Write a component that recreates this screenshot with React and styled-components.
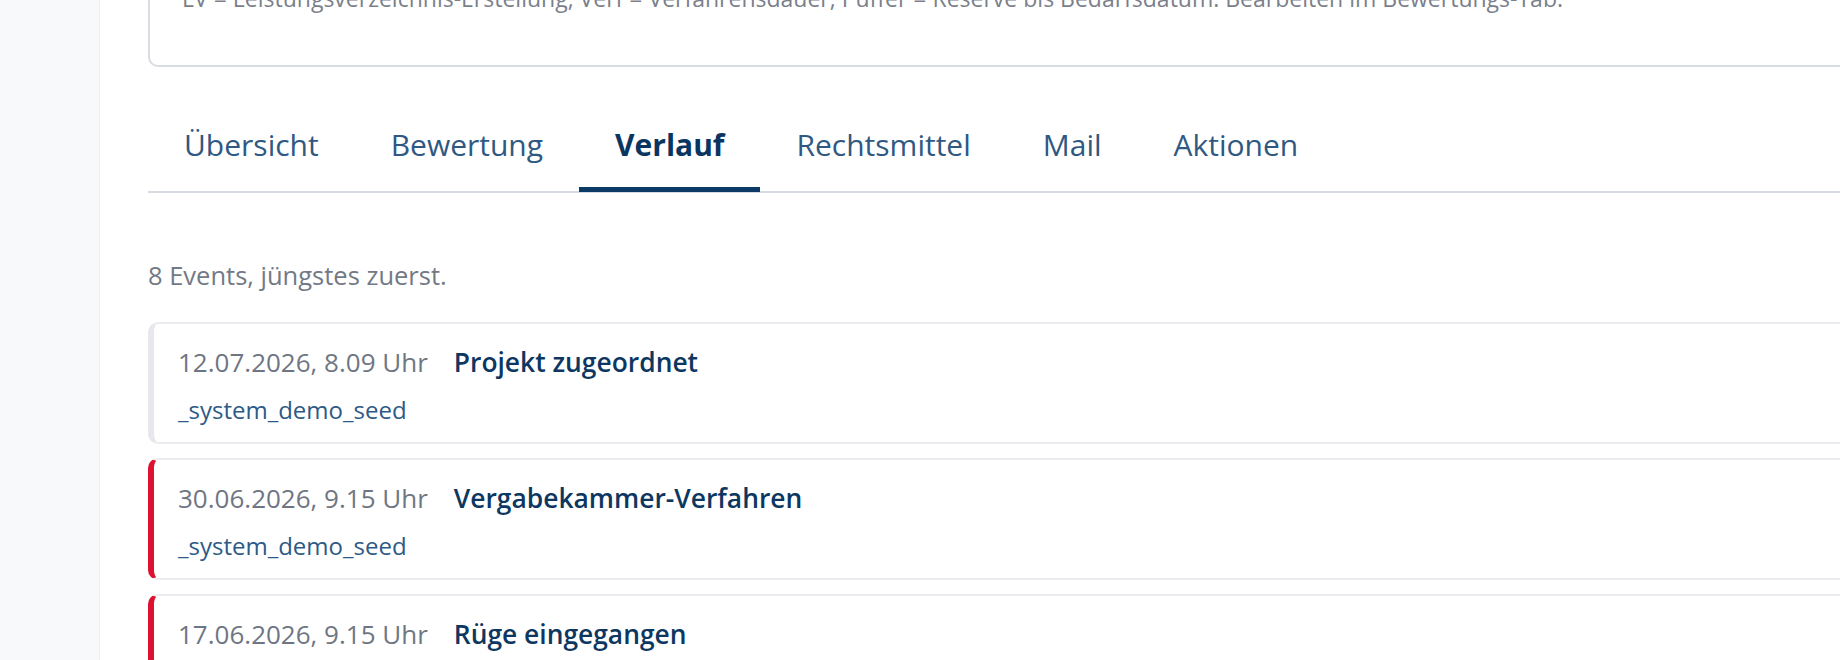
import React from "react";
import styled, { createGlobalStyle } from "styled-components";

const Global = createGlobalStyle`
  html, body { margin: 0; padding: 0; background: #ffffff; overflow: hidden; }
  body { font-family: "Open Sans", "Noto Sans", sans-serif; }
  * { box-sizing: border-box; }
`;

const Shell = styled.div`
  display: flex;
  width: 100%;
  height: 660px;
  overflow: hidden;
`;

const Sidebar = styled.aside`
  flex: 0 0 100px;
  background: #f8f9fb;
  border-right: 1px solid #eef1f4;
`;

const Main = styled.main`
  flex: 1;
  min-width: 0;
  padding-left: 48px;
  margin-right: -60px;
  display: flex;
  flex-direction: column;
`;

const NoteCard = styled.section`
  margin-top: -40px;
  border: 2px solid #d8dde3;
  border-radius: 10px;
  padding: 20px 32px 50px 32px;
  color: #7a7f8b;
  font-size: 23px;
  line-height: 33px;
  white-space: nowrap;
`;

const TabBar = styled.nav`
  display: flex;
  margin-top: 35px;
  border-bottom: 2px solid #d6dce2;
`;

const Tab = styled.button`
  appearance: none;
  background: none;
  border: none;
  border-bottom: 5px solid ${(p) => (p.$active ? "#0b3a66" : "transparent")};
  margin-bottom: -1px;
  padding: 24px 36px 24px;
  font-family: inherit;
  font-size: 30px;
  line-height: 37px;
  font-weight: ${(p) => (p.$active ? 700 : 400)};
  color: ${(p) => (p.$active ? "#0a3560" : "#2f5882")};
  cursor: pointer;
`;

const Summary = styled.p`
  margin: 65px 0 0;
  font-size: 25.5px;
  line-height: 34px;
  color: #737985;
`;

const EventList = styled.div`
  display: flex;
  flex-direction: column;
  gap: 14px;
  margin-top: 30px;
`;

const EventCard = styled.article`
  border: 2px solid #eaecf0;
  border-left: 6px solid ${(p) => (p.$accent ? "#dd1230" : "#e6e8ed")};
  border-radius: 10px;
  background: #ffffff;
  padding: 20px 24px 16px;
  display: flex;
  flex-direction: column;
  gap: 14px;
`;

const EventHead = styled.div`
  display: flex;
  align-items: baseline;
  gap: 26px;
  line-height: 36px;
`;

const When = styled.span`
  font-size: 26px;
  color: #6f7683;
`;

const Title = styled.span`
  font-size: 26.4px;
  font-weight: 600;
  color: #0d3761;
`;

const Actor = styled.div`
  font-size: 24px;
  line-height: 32px;
  color: #2d5a86;
`;

const tabs = ["Übersicht", "Bewertung", "Verlauf", "Rechtsmittel", "Mail", "Aktionen"];

const events = [
  { when: "12.07.2026, 8.09 Uhr", title: "Projekt zugeordnet", actor: "_system_demo_seed", accent: false },
  { when: "30.06.2026, 9.15 Uhr", title: "Vergabekammer-Verfahren", actor: "_system_demo_seed", accent: true },
  { when: "17.06.2026, 9.15 Uhr", title: "Rüge eingegangen", actor: "_system_demo_seed", accent: true },
];

export default function App() {
  return (
    <>
      <Global />
      <Shell>
        <Sidebar />
        <Main>
          <NoteCard>
            LV = Leistungsverzeichnis-Erstellung, Verf = Verfahrensdauer, Puffer = Reserve bis Bedarfsdatum. Bearbeiten im Bewertungs-Tab.
          </NoteCard>
          <TabBar>
            {tabs.map((t) => (
              <Tab key={t} $active={t === "Verlauf"}>
                {t}
              </Tab>
            ))}
          </TabBar>
          <Summary>8 Events, jüngstes zuerst.</Summary>
          <EventList>
            {events.map((e, i) => (
              <EventCard key={i} $accent={e.accent}>
                <EventHead>
                  <When>{e.when}</When>
                  <Title>{e.title}</Title>
                </EventHead>
                <Actor>{e.actor}</Actor>
              </EventCard>
            ))}
          </EventList>
        </Main>
      </Shell>
    </>
  );
}
